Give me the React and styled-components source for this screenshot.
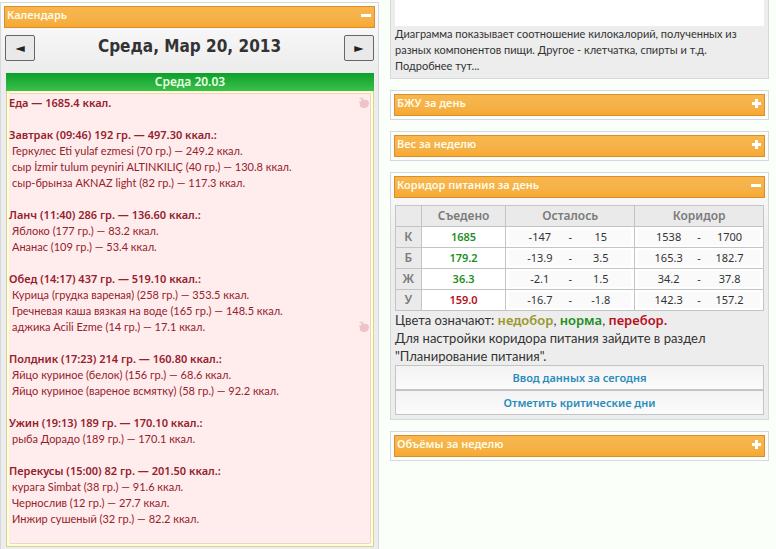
import React, { useState } from "react";
import styled, { createGlobalStyle } from 'styled-components'

const meals = [
  {
    title: 'Завтрак (09:46) 192 гр. — 497.30 ккал.:',
    items: [
      'Геркулес Eti yulaf ezmesi (70 гр.) — 249.2 ккал.',
      'сыр İzmir tulum peyniri ALTINKILIÇ (40 гр.) — 130.8 ккал.',
      'сыр-брынза AKNAZ light (82 гр.) — 117.3 ккал.'
    ]
  },
  {
    title: 'Ланч (11:40) 286 гр. — 136.60 ккал.:',
    items: [
      'Яблоко (177 гр.) — 83.2 ккал.',
      'Ананас (109 гр.) — 53.4 ккал.'
    ]
  },
  {
    title: 'Обед (14:17) 437 гр. — 519.10 ккал.:',
    items: [
      'Курица (грудка вареная) (258 гр.) — 353.5 ккал.',
      'Гречневая каша вязкая на воде (165 гр.) — 148.5 ккал.',
      'аджика Acili Ezme (14 гр.) — 17.1 ккал.'
    ],
    marked: true
  },
  {
    title: 'Полдник (17:23) 214 гр. — 160.80 ккал.:',
    items: [
      'Яйцо куриное (белок) (156 гр.) — 68.6 ккал.',
      'Яйцо куриное (вареное всмятку) (58 гр.) — 92.2 ккал.'
    ]
  },
  {
    title: 'Ужин (19:13) 189 гр. — 170.10 ккал.:',
    items: ['рыба Дорадо (189 гр.) — 170.1 ккал.']
  },
  {
    title: 'Перекусы (15:00) 82 гр. — 201.50 ккал.:',
    items: [
      'курага Simbat (38 гр.) — 91.6 ккал.',
      'Чернослив (12 гр.) — 27.7 ккал.',
      'Инжир сушеный (32 гр.) — 82.2 ккал.'
    ]
  }
]

const corridor = [
  { name: 'К', eaten: '1685', status: 'normal', left: ['-147', '15'], range: ['1538', '1700'] },
  { name: 'Б', eaten: '179.2', status: 'normal', left: ['-13.9', '3.5'], range: ['165.3', '182.7'] },
  { name: 'Ж', eaten: '36.3', status: 'normal', left: ['-2.1', '1.5'], range: ['34.2', '37.8'] },
  { name: 'У', eaten: '159.0', status: 'over', left: ['-16.7', '-1.8'], range: ['142.3', '157.2'] }
]

const statusColors = {
  under: '#98982a',
  normal: '#1c8f1c',
  over: '#b8101c'
}

const boldFont = '"Noto Sans", "Open Sans", sans-serif'
const textFont = 'Lato, "Noto Sans", sans-serif'

const AppleIcon = () => (
  <Apple viewBox="0 0 11 12" aria-hidden="true">
    <path d="M1 1 C3 0 5 0 6 3 C8 2 11 3 11 6 C11 9 9 11 6 11 C3 11 1 9 2 7 L1 5 L3 4 L4 3 Z" />
  </Apple>
)

const Panel = ({ title, open, children }) => {
  const [isOpen, setIsOpen] = useState(open);

  return (
    <PanelStyled $open={isOpen}>
      <PanelBar
        type="button"
        aria-expanded={!!isOpen}
        onClick={() => setIsOpen(!isOpen)}>
        {title}
        <ToggleIcon viewBox="0 0 10 10" aria-hidden="true">
          <path d={isOpen ? 'M0 4h10v3H0z' : 'M4 1h3v3h3v3H7v3H4V7H1V4h3z'} />
        </ToggleIcon>
      </PanelBar>
      {isOpen && children}
    </PanelStyled>
  );
};

const Range = ({ values }) => (
  <RangeStyled>
    <span>{values[0]}</span>
    <span>-</span>
    <span>{values[1]}</span>
  </RangeStyled>
)

export default function App() {
  return (
    <>
      <GlobalStyle />
      <Page>
        <Column>
          <Panel title="Календарь" open>
            <DayNav>
              <NavButton type="button" aria-label="Предыдущий день">◄</NavButton>
              <h1>Среда, Мар 20, 2013</h1>
              <NavButton type="button" aria-label="Следующий день">►</NavButton>
            </DayNav>
            <DayHeader>Среда 20.03</DayHeader>
            <DayBody>
              <Diary>
                <DiaryRow>
                  <strong>Еда — 1685.4 ккал.</strong>
                  <AppleIcon />
                </DiaryRow>
                {meals.map((meal) => (
                  <Meal key={meal.title}>
                    <h2>{meal.title}</h2>
                    <ul>
                      {meal.items.map((item, i) => (
                        <DiaryRow as="li" key={item}>
                          <span>{item}</span>
                          {meal.marked && i === meal.items.length - 1 && <AppleIcon />}
                        </DiaryRow>
                      ))}
                    </ul>
                  </Meal>
                ))}
              </Diary>
            </DayBody>
          </Panel>
        </Column>

        <Column>
          <ChartPanel>
            <ChartArea />
            <ChartNote>
              Диаграмма показывает соотношение килокалорий, полученных из
              разных компонентов пищи. Другое - клетчатка, спирты и т.д.
              <a href="#more">Подробнее тут...</a>
            </ChartNote>
          </ChartPanel>
          <Panel title="БЖУ за день" />
          <Panel title="Вес за неделю" />
          <Panel title="Коридор питания за день" open>
            <PanelContent>
              <CorridorTable>
                <colgroup>
                  <col width="7%" />
                  <col width="23%" />
                  <col width="35%" />
                  <col width="35%" />
                </colgroup>
                <thead>
                  <tr>
                    <th></th>
                    <th scope="col">Съедено</th>
                    <th scope="col">Осталось</th>
                    <th scope="col">Коридор</th>
                  </tr>
                </thead>
                <tbody>
                  {corridor.map((row) => (
                    <tr key={row.name}>
                      <th scope="row">{row.name}</th>
                      <td><Status $status={row.status}>{row.eaten}</Status></td>
                      <td><Range values={row.left} /></td>
                      <td><Range values={row.range} /></td>
                    </tr>
                  ))}
                </tbody>
              </CorridorTable>
              <Legend>
                Цвета означают: <Status $status="under">недобор</Status>
                , <Status $status="normal">норма</Status>
                , <Status $status="over">перебор.</Status>
              </Legend>
              <Legend>
                Для настройки коридора питания зайдите в раздел "Планирование питания".
              </Legend>
              <Links>
                <a href="#today">Ввод данных за сегодня</a>
                <a href="#days">Отметить критические дни</a>
              </Links>
            </PanelContent>
          </Panel>
          <Panel title="Объёмы за неделю" />
        </Column>
      </Page>
    </>
  );
}

const GlobalStyle = createGlobalStyle`
  * {
    box-sizing: border-box;
  }
  body {
    margin: 0;
    background: #fbfffa;
    color: #333;
    font-family: ${boldFont};
    font-size: 11px;
    line-height: 16px;
  }
  h1, h2, p, ul {
    margin: 0;
    padding: 0;
  }
  a {
    text-decoration: none;
  }
`

const Page = styled.main`
  display: grid;
  grid-template-columns: 1fr 1fr;
  align-items: start;
  gap: 11px;
  padding-right: 7px;
`

const Column = styled.div`
  display: flex;
  flex-direction: column;
  gap: 11px;
  min-width: 0;
  &:first-child {
    padding-top: 2px;
  }
`

const PanelStyled = styled.section`
  padding: 3px;
  border: 1px solid #d5d8dc;
  background: ${({ $open }) => $open ? 'linear-gradient(#fefefe, #ededed 64px)' : '#fdfdfd'};
`

const PanelBar = styled.button`
  display: flex;
  align-items: flex-start;
  justify-content: space-between;
  width: 100%;
  height: 22px;
  padding: 0 3px 0 2px;
  border: 1px solid #d98e2b;
  background: linear-gradient(#f8b64c, #f5b24a 55%, #f7a92f);
  color: #fffbe6;
  font: 600 11px/16px ${boldFont};
  text-align: left;
  cursor: pointer;
`

const ToggleIcon = styled.svg`
  width: 10px;
  height: 10px;
  margin-top: 3px;
  fill: #fff;
`

const DayNav = styled.div`
  display: flex;
  align-items: flex-start;
  justify-content: space-between;
  height: 45px;
  padding: 7px 1px 0;
  & h1 {
    font: bold 17px/22px "DejaVu Sans Condensed", "DejaVu Sans", Verdana, sans-serif;
  }
`

const NavButton = styled.button`
  width: 30px;
  height: 26px;
  padding: 0;
  border: 1px solid #666;
  border-radius: 2px;
  background: #e9e9e9;
  color: #222;
  font: 12px/16px "DejaVu Sans", sans-serif;
`

const DayHeader = styled.div`
  margin: 0 1px 0 2px;
  height: 18px;
  background: linear-gradient(#0aa02a, #3cc04c);
  color: #e8ffe0;
  font-size: 12px;
  font-weight: 600;
  line-height: 18px;
  text-align: center;
`

const DayBody = styled.div`
  margin: 0 1px 0 2px;
  padding: 2px;
  border: 1px solid #d3d1a5;
  border-top: 0;
  background: #ffffd2;
`

const Diary = styled.div`
  padding: 1px 1px 16px 0;
  border: 1px solid #eed3c8;
  border-left: 0;
  border-radius: 2px;
  background: #ffeded;
  color: #96202c;
`

const DiaryRow = styled.div`
  display: flex;
  align-items: center;
  justify-content: space-between;
  height: 16px;
  font-family: ${textFont};
  & strong {
    font-family: ${boldFont};
    font-weight: 600;
  }
`

const Meal = styled.div`
  padding-top: 16px;
  & h2 {
    font-size: 11px;
    font-weight: 600;
  }
  & ul {
    padding-left: 3px;
    list-style: none;
  }
`

const Apple = styled.svg`
  width: 11px;
  height: 12px;
  fill: #eec4c8;
`

const ChartPanel = styled.section`
  padding: 0 4px 4px;
  border: 1px solid #d5d8dc;
  border-top: 0;
  background: #ededed;
`

const ChartArea = styled.div`
  height: 26px;
  background: #fff;
`

const ChartNote = styled.p`
  padding-right: 16px;
  font-family: ${textFont};
  & a {
    display: block;
    color: #333;
  }
`

const PanelContent = styled.div`
  padding: 7px 1px 1px;
`

const CorridorTable = styled.table`
  width: 100%;
  border-collapse: collapse;
  table-layout: fixed;
  & th, & td {
    height: 21px;
    padding: 0;
    border: 1px solid #c4c4c4;
    text-align: center;
  }
  & th {
    background: #eaeaea;
    color: #7b7b7b;
    font-size: 12px;
    font-weight: 600;
  }
  & td {
    background: #fff;
  }
`

const RangeStyled = styled.div`
  display: grid;
  grid-template-columns: 1fr 10px 1fr;
  margin: 0 3px;
  padding: 0 5px;
  background: #fafafa;
`

const Status = styled.span`
  color: ${({ $status }) => statusColors[$status]};
  font-family: ${boldFont};
  font-weight: 600;
`

const Legend = styled.p`
  font-family: ${textFont};
  font-size: 13px;
  line-height: 18px;
`

const Links = styled.nav`
  display: flex;
  flex-direction: column;
  & a {
    height: 25px;
    border: 1px solid #c4c4c4;
    background: linear-gradient(#f3f3f3, #fbfbfb);
    color: #2a8cba;
    font-weight: 600;
    line-height: 23px;
    text-align: center;
  }
`
